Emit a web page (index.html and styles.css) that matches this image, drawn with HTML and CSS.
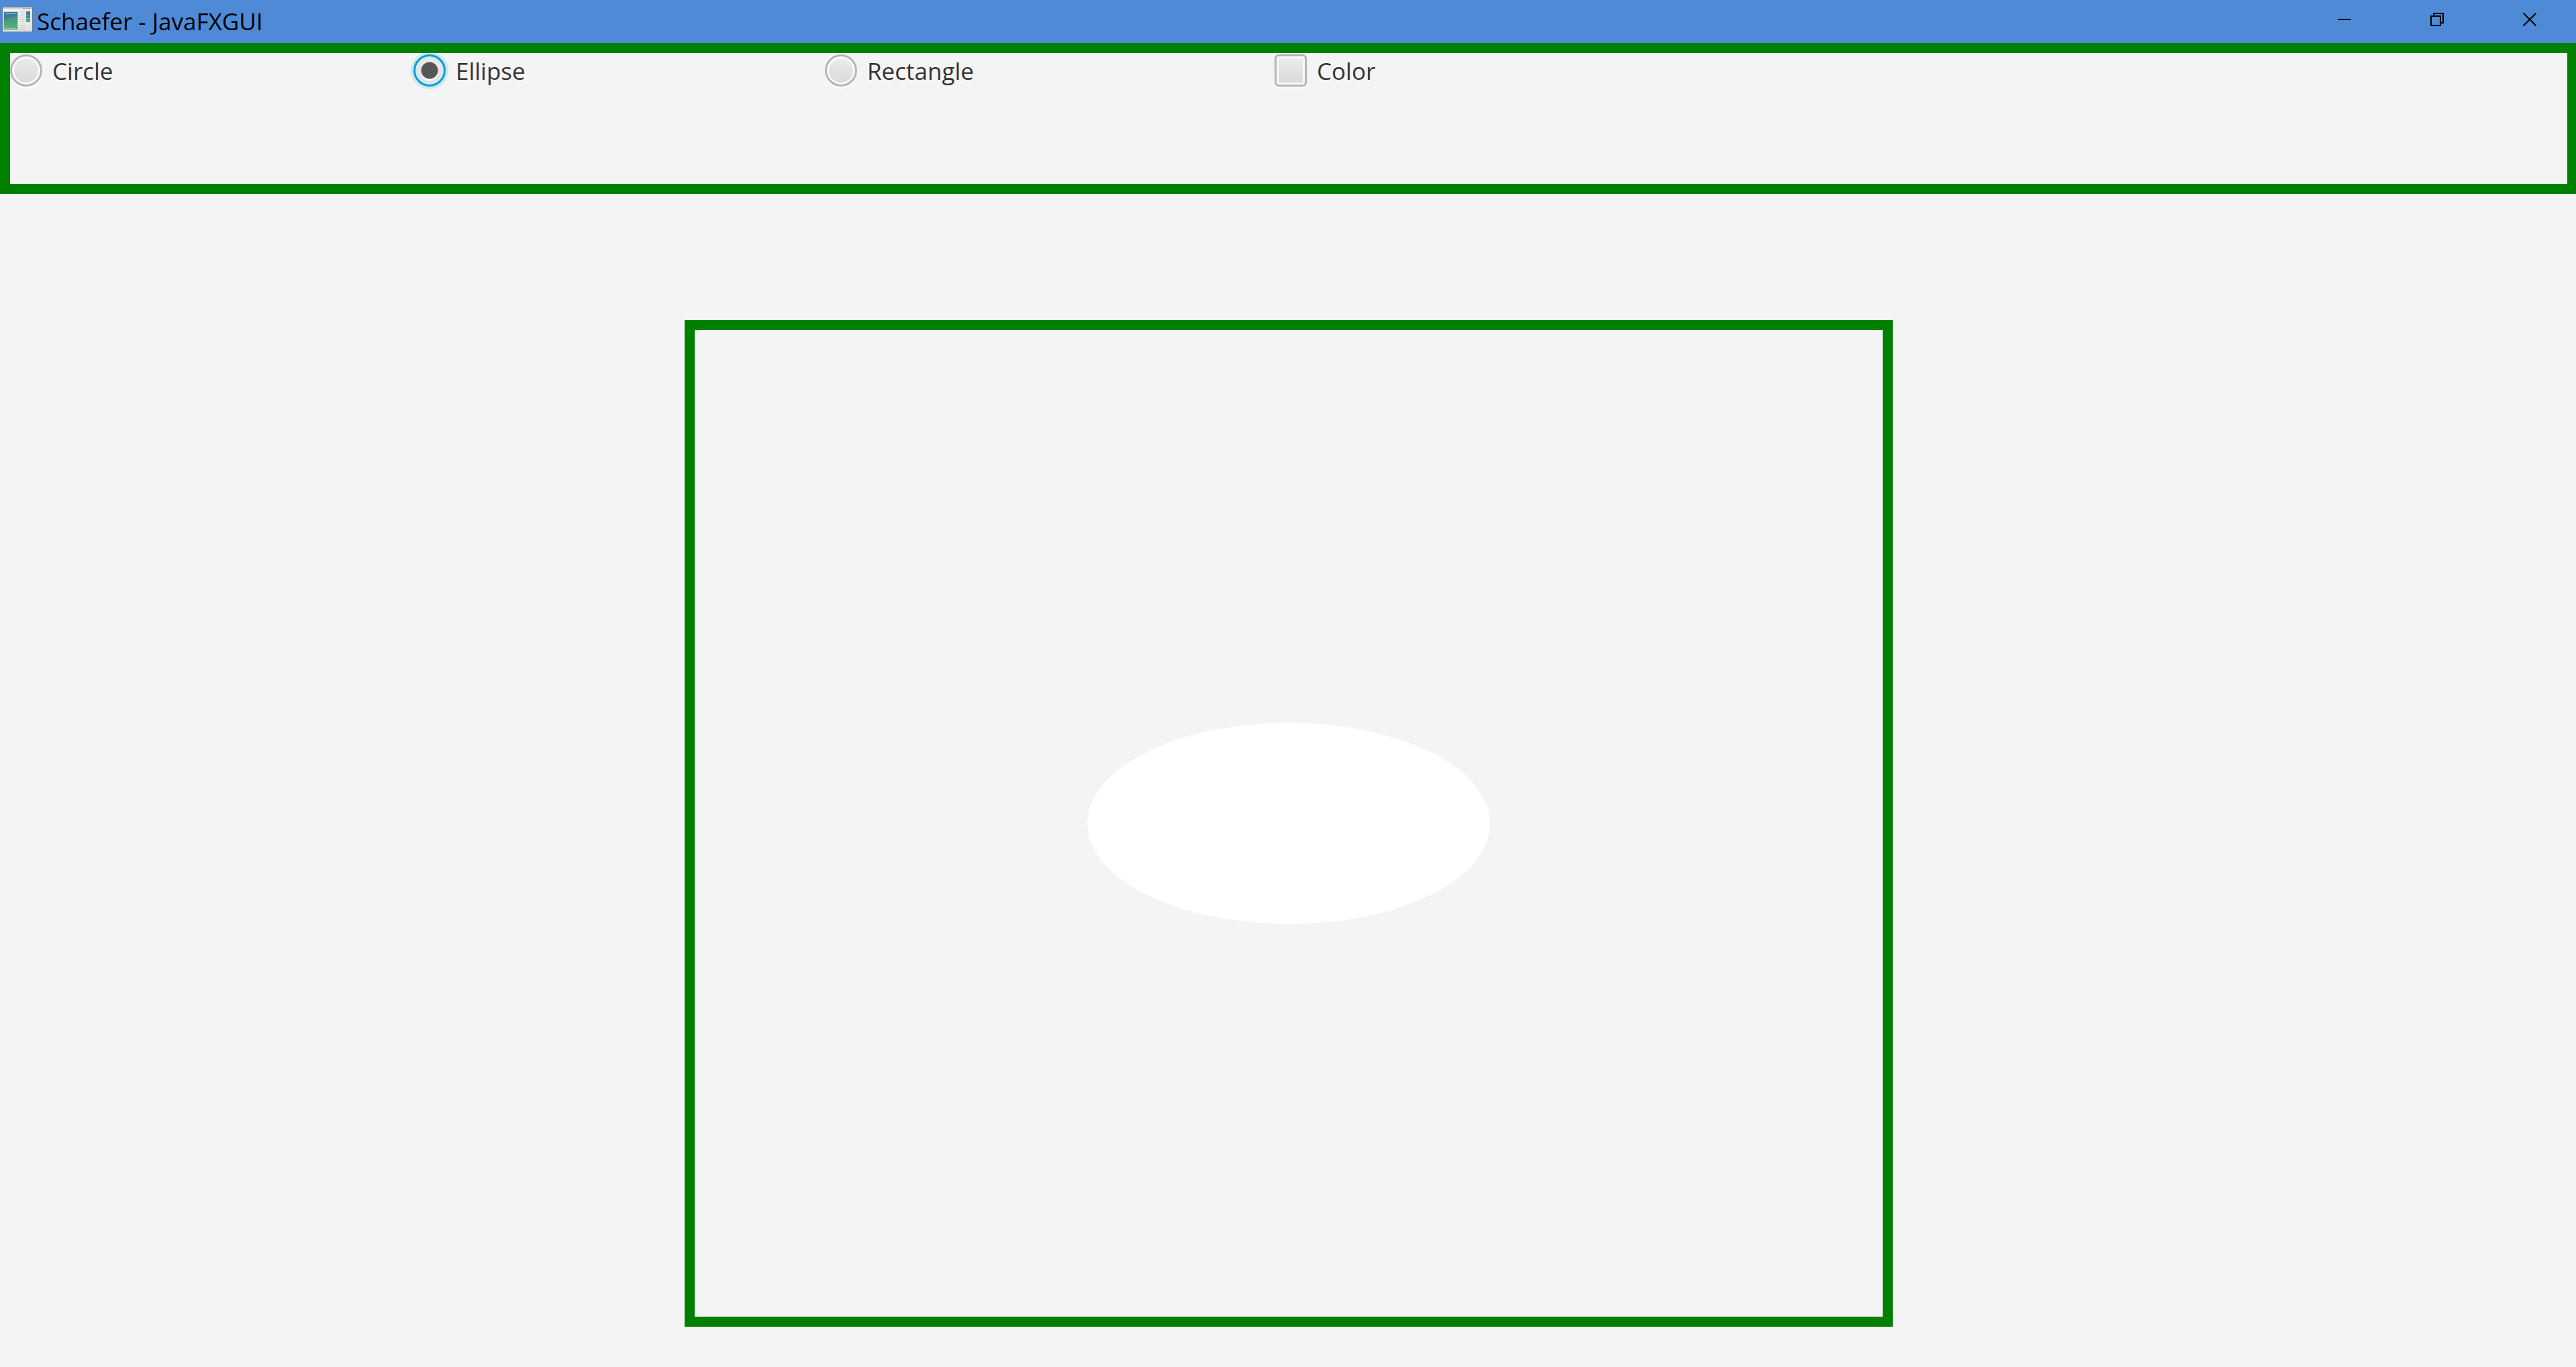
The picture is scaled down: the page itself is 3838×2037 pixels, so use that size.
FILE: index.html
```html
<!DOCTYPE html>
<html lang="en">
<head>
<meta charset="utf-8">
<title>Schaefer - JavaFXGUI</title>
<link rel="stylesheet" href="styles.css">
</head>
<body>
<header class="titlebar">
  <svg class="app-icon" viewBox="0 0 48 40" aria-hidden="true">
    <defs>
      <linearGradient id="pane" x1="0" y1="0" x2="0" y2="1">
        <stop offset="0" stop-color="#4078a5"/><stop offset=".5" stop-color="#3a8a8a"/><stop offset="1" stop-color="#5fb573"/>
      </linearGradient>
      <linearGradient id="face" x1="0" y1="0" x2="1" y2="1">
        <stop offset="0" stop-color="#fff"/><stop offset="1" stop-color="#dcdcdc"/>
      </linearGradient>
    </defs>
    <rect x="1.500" y="1.500" width="45" height="37" fill="url(#face)" stroke="#5e7796"/>
    <path d="M2 3.500h44" stroke="#d3d6da" stroke-width="3"/>
    <path d="M32 3.500h13" stroke="#9aa0a8" stroke-dasharray="3 1"/>
    <rect x="3.500" y="8.500" width="21" height="27" fill="url(#pane)" stroke="#a9cfd0"/>
    <path d="M4 23Q10 16 24 15V35H4z" fill="#6cbf72" opacity=".3"/>
    <path d="M6 11.500h16M6 33.500h16" stroke="#8cc5bb"/>
    <path d="M27 7.500h8M27 10.500h8M27 13.500h8M27 16.500h8M27 20.500h8M27 23.500h8M27 29.500h8M27 32.500h8M27 34.500h8" stroke="#bfbfbf"/>
    <rect x="37" y="8" width="6" height="16" fill="url(#pane)"/>
    <path d="M37 13.500h6M37 18.500h6" stroke="#78b5a8"/>
  </svg>
  <h1 class="title">Schaefer - JavaFXGUI</h1>
  <div class="window-buttons">
    <button class="window-button" type="button" aria-label="Minimize">
      <svg class="glyph" viewBox="0 0 20 20"><path d="M0 10h20"/></svg>
    </button>
    <button class="window-button" type="button" aria-label="Restore">
      <svg class="glyph" viewBox="0 0 20 20"><path d="M1 5h14v14H1zM5 5V1h14v14h-4"/></svg>
    </button>
    <button class="window-button" type="button" aria-label="Close">
      <svg class="glyph" viewBox="0 0 20 20"><path d="M.5.500l19 19M19.500.500l-19 19"/></svg>
    </button>
  </div>
</header>
<form class="toolbar">
  <label class="option"><input class="mark radio" type="radio" name="shape" value="circle">Circle</label>
  <label class="option"><input class="mark radio" type="radio" name="shape" value="ellipse" checked>Ellipse</label>
  <label class="option"><input class="mark radio" type="radio" name="shape" value="rectangle">Rectangle</label>
  <label class="option"><input class="mark" type="checkbox" name="color">Color</label>
</form>
<main class="stage">
  <div class="canvas">
    <div class="ellipse"></div>
  </div>
</main>
</body>
</html>
```
FILE: styles.css
```css
* {
  box-sizing: border-box;
}

body {
  margin: 0;
  min-height: 100vh;
  display: flex;
  flex-direction: column;
  background: #f4f4f4;
  color: #333;
  font: 35px/50px "Segoe UI", "Open Sans", sans-serif;
}

.titlebar {
  display: flex;
  align-items: flex-start;
  height: 64px;
  padding-left: 2px;
  background: #4f8ad6;
  color: #000;
}

.app-icon {
  width: 48px;
  height: 40px;
  margin-top: 9px;
}

.title {
  margin: 7px 0 0 5px;
  font: inherit;
}

.window-buttons {
  display: flex;
  margin-left: auto;
}

.window-button {
  display: grid;
  place-items: center;
  width: 138px;
  height: 58px;
  padding: 0;
  border: 0;
  background: none;
}

.glyph {
  width: 20px;
  height: 20px;
  fill: none;
  stroke: #000;
  stroke-width: 2;
}

.toolbar {
  display: grid;
  grid-template-columns: 601px 613px 670px auto;
  align-items: start;
  height: 225px;
  padding-top: 2px;
  border: 15px solid #008000;
  border-right-width: 13px;
}

.option {
  display: flex;
  gap: 15px;
  justify-self: start;
}

.mark {
  appearance: none;
  flex: none;
  width: 48px;
  height: 48px;
  margin: 0;
  border: 3px solid #b5b5b5;
  border-radius: 6px;
  background: linear-gradient(#ececec, #d9d9d9);
  box-shadow: inset 0 0 0 3px #fafafa, 0 3px 0 #fcfcfc;
}

.radio {
  border-radius: 50%;
}

.radio:checked {
  border-color: #039ed3;
  background: radial-gradient(circle at 50% 50%, #575757 12px, transparent 13px),
    radial-gradient(circle at 50% 57%, #fff 12px, transparent 13px),
    linear-gradient(#efefef, #dcdcdc);
  box-shadow: inset 0 0 0 4px #d9e8ee, 0 0 0 4px rgba(3, 158, 211, 0.15);
}

.stage {
  flex: 1;
  display: grid;
  place-items: end center;
  padding: 188px 0 60px 2px;
}

.canvas {
  display: grid;
  place-items: center;
  width: 1800px;
  max-width: 100%;
  height: 1500px;
  border: 15px solid #008000;
}

.ellipse {
  width: 600px;
  height: 300px;
  border-radius: 50%;
  background: #fff;
}
```
